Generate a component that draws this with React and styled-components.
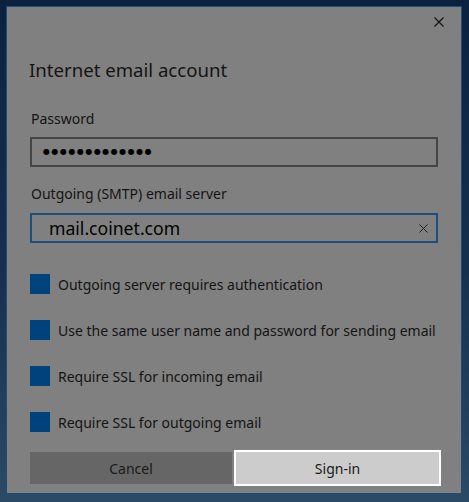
import React from 'react'
import styled, {createGlobalStyle} from 'styled-components'

const GlobalStyle = createGlobalStyle`
  html, body {
    margin: 0;
    padding: 0;
  }
  body {
    width: 469px;
    height: 502px;
    overflow: hidden;
    background: linear-gradient(180deg, #0a2240 0%, #15314f 55%, #2b4a66 100%);
    font-family: "Noto Sans", "Open Sans", sans-serif;
  }
`;

const Screen = styled.div`
  padding: 6px 7px 8px 6px;
  box-sizing: border-box;
  height: 502px;
`;

const Dialog = styled.div`
  box-sizing: border-box;
  width: 456px;
  height: 488px;
  border: 1px solid #1f4d7a;
  background: #808080;
  display: flex;
  flex-direction: column;
  padding: 0 23px;
  color: #141414;
  & > * { flex: none; }
`;

const TopBar = styled.div`
  display: flex;
  justify-content: flex-end;
  height: 30px;
  align-items: center;
  margin-right: -9px;
`;

const CloseBtn = styled.button`
  border: 0;
  background: transparent;
  padding: 0;
  width: 16px;
  height: 16px;
  display: flex;
  align-items: center;
  justify-content: center;
  svg { display: block; }
`;

const Title = styled.h1`
  margin: 20px 0 0 -1px;
  font-size: 18.6px;
  font-weight: 400;
  line-height: 26px;
`;

const Label = styled.div`
  margin-top: ${({top}) => top}px;
  font-size: 14px;
  line-height: 20px;
  padding-left: 1px;
`;

const Field = styled.div`
  box-sizing: border-box;
  margin-top: ${({top}) => top}px;
  height: 30px;
  border: 2px solid ${({focused}) => focused ? '#1b4f80' : '#454545'};
  display: flex;
  align-items: center;
  padding: 0 8px 0 ${({pad}) => pad}px;
  justify-content: space-between;
`;

const Dots = styled.span`
  font-family: "DejaVu Sans", sans-serif;
  font-size: 8px;
  letter-spacing: 1.5px;
  color: #000;
  line-height: 1;
`;

const Value = styled.span`
  font-size: 17.6px;
  color: #000;
`;

const Checks = styled.div`
  margin-top: 31px;
  display: flex;
  flex-direction: column;
  gap: 26px;
`;

const CheckRow = styled.label`
  display: flex;
  align-items: center;
  gap: 8px;
  height: 20px;
  font-size: 14px;
`;

const Box = styled.span`
  width: 20px;
  height: 20px;
  background: #00437c;
  flex: none;
`;

const Buttons = styled.div`
  margin-top: 18px;
  display: flex;
  align-items: center;
  margin-right: -3px;
  gap: 2px;
`;

const Button = styled.button`
  box-sizing: border-box;
  height: ${({primary}) => primary ? 36 : 32}px;
  width: ${({primary}) => primary ? 207 : 202}px;
  border: ${({primary}) => primary ? '2px solid #ffffff' : '0'};
  background: ${({primary}) => primary ? '#cccccc' : '#666666'};
  font-family: "Noto Sans", "Open Sans", sans-serif;
  font-size: 14px;
  color: #1a1a1a;
  padding: 0;
`;

const XIcon = ({size, stroke}) => (
  <svg width={size} height={size} viewBox="0 0 10 10">
    <path d="M0.5 0.5 L9.5 9.5 M9.5 0.5 L0.5 9.5" stroke={stroke} strokeWidth="1.1" fill="none"/>
  </svg>
);

const options = [
  'Outgoing server requires authentication',
  'Use the same user name and password for sending email',
  'Require SSL for incoming email',
  'Require SSL for outgoing email'
];

const App = () => {
  return (
    <>
      <GlobalStyle/>
      <Screen>
        <Dialog>
          <TopBar>
            <CloseBtn><XIcon size={10} stroke="#111"/></CloseBtn>
          </TopBar>
          <Title>Internet email account</Title>
          <Label top={26}>Password</Label>
          <Field top={8} pad={11}>
            <Dots>●●●●●●●●●●●●●</Dots>
          </Field>
          <Label top={17}>Outgoing (SMTP) email server</Label>
          <Field top={9} pad={17} focused>
            <Value>mail.coinet.com</Value>
            <XIcon size={9} stroke="#222"/>
          </Field>
          <Checks>
            {options.map((o, i) => (
              <CheckRow key={i}><Box/>{o}</CheckRow>
            ))}
          </Checks>
          <Buttons>
            <Button>Cancel</Button>
            <Button primary>Sign-in</Button>
          </Buttons>
        </Dialog>
      </Screen>
    </>
  );
};

export default App
